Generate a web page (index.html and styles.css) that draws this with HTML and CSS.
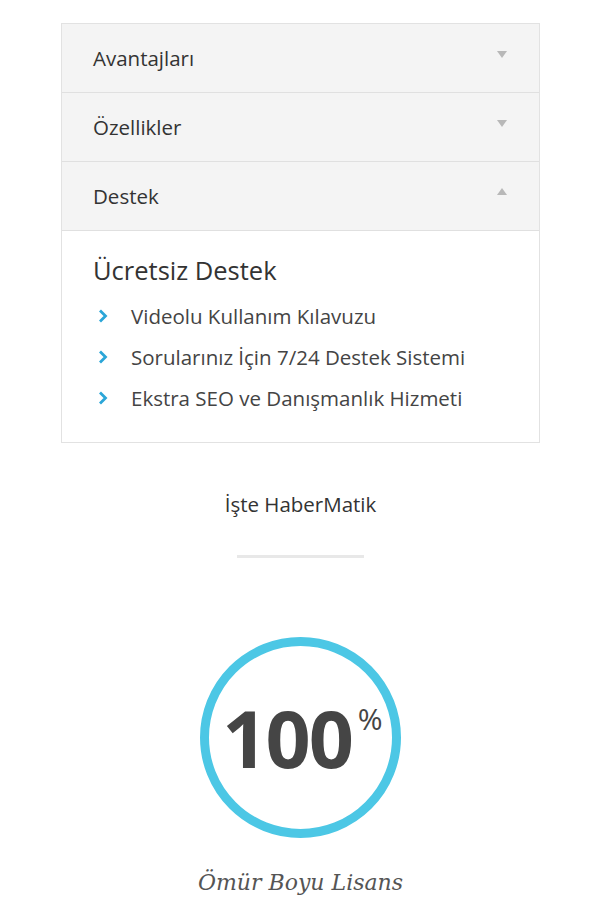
FILE: index.html
```html
<!DOCTYPE html>
<html lang="tr">
<head>
<meta charset="utf-8">
<link rel="stylesheet" href="styles.css">
</head>
<body>
<div class="accordion">
  <div class="acc-head"><span>Avantajları</span><span class="tri down"></span></div>
  <div class="acc-head"><span>Özellikler</span><span class="tri down"></span></div>
  <div class="acc-head"><span>Destek</span><span class="tri up"></span></div>
  <div class="acc-body">
    <h3 class="acc-title">Ücretsiz Destek</h3>
    <ul class="list">
      <li><svg class="chev" viewBox="0 0 10 14" width="10" height="14"><path d="M2 1.5 L7.5 7 L2 12.5" fill="none" stroke="#2ba6d8" stroke-width="2.8"/></svg>Videolu Kullanım Kılavuzu</li>
      <li><svg class="chev" viewBox="0 0 10 14" width="10" height="14"><path d="M2 1.5 L7.5 7 L2 12.5" fill="none" stroke="#2ba6d8" stroke-width="2.8"/></svg>Sorularınız İçin 7/24 Destek Sistemi</li>
      <li><svg class="chev" viewBox="0 0 10 14" width="10" height="14"><path d="M2 1.5 L7.5 7 L2 12.5" fill="none" stroke="#2ba6d8" stroke-width="2.8"/></svg>Ekstra SEO ve Danışmanlık Hizmeti</li>
    </ul>
  </div>
</div>
<div class="section">
  <p class="subtitle">İşte HaberMatik</p>
  <div class="divider"></div>
  <div class="circle">
    <span class="num">100</span><span class="pct">%</span>
  </div>
  <p class="caption">Ömür Boyu Lisans</p>
</div>
</body>
</html>
```
FILE: styles.css
```css
html, body { margin: 0; padding: 0; background: #fff; }
body { font-family: "Open Sans", "Noto Sans", sans-serif; color: #333; }
.accordion {
  margin: 23px 0 0 61px;
  width: 479px;
  border: 1px solid #e2e2e2;
  box-sizing: border-box;
}
.acc-head {
  height: 68px;
  background: #f4f4f4;
  border-bottom: 1px solid #e0e0e0;
  display: flex;
  align-items: center;
  justify-content: space-between;
  padding: 0 32px 0 31px;
  font-size: 20.5px;
  color: #333;
}
.tri { width: 0; height: 0; border-left: 5px solid transparent; border-right: 5px solid transparent; }
.tri.down { border-top: 7px solid #b8b8b8; margin-top: -7px; }
.tri.up { border-bottom: 7px solid #b8b8b8; margin-top: -9px; }
.acc-body {
  padding: 24px 31px 24px 31px;
  background: #fff;
}
.acc-title {
  margin: 0 0 10px 0;
  font-weight: 400;
  font-size: 25.5px;
  color: #333;
  line-height: 30px;
}
.list { list-style: none; margin: 0; padding: 0; }
.list li {
  display: flex;
  align-items: center;
  height: 41px;
  font-size: 20.5px;
  color: #444;
}
.chev { margin: 0 23px 0 5px; flex: none; }
.section {
  display: flex;
  flex-direction: column;
  align-items: center;
  padding-left: 10px;
}
.subtitle {
  margin: 47px 0 0 0;
  font-size: 20.5px;
  color: #333;
  line-height: 28px;
}
.divider {
  margin-top: 37px;
  width: 127px;
  height: 3px;
  background: #e8e8e8;
}
.circle {
  margin-top: 79px;
  width: 201px;
  height: 201px;
  box-sizing: border-box;
  border-radius: 50%;
  border: 9px solid #4cc7e5;
  display: flex;
  align-items: center;
  justify-content: center;
}
.num {
  font-weight: 700;
  font-size: 79px;
  letter-spacing: -2px;
  color: #454545;
  line-height: 1;
  margin-left: 4px;
}
.pct {
  font-size: 30px;
  color: #454545;
  align-self: flex-start;
  margin-top: 58px;
  margin-left: 6px;
  line-height: 1;
}
.caption {
  margin: 30px 0 0 0;
  font-family: "DejaVu Serif", serif;
  font-style: italic;
  font-size: 22px;
  line-height: 30px;
  color: #555;
}
```
